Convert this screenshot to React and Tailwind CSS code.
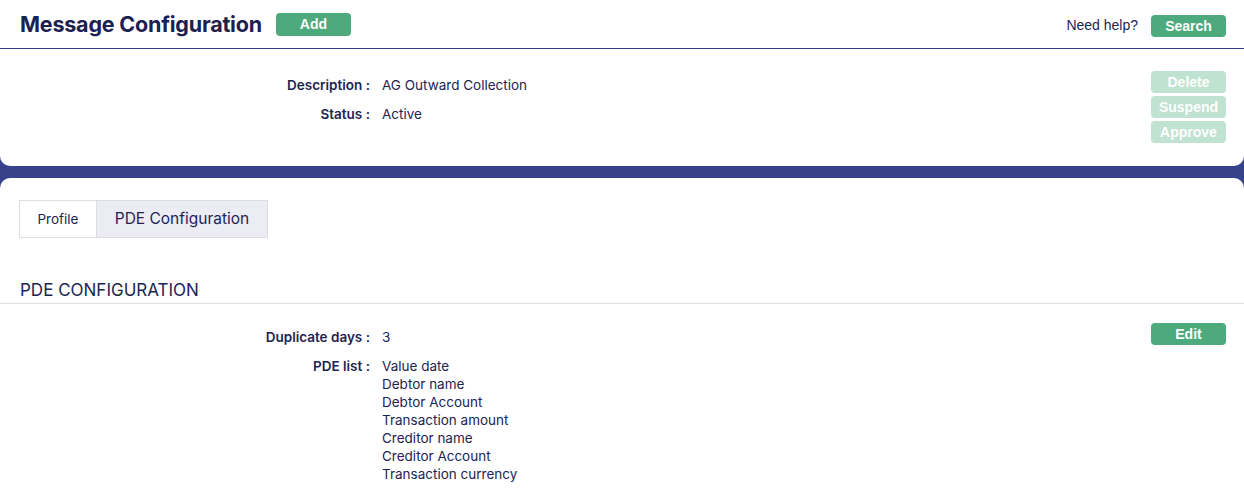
import React from "react";

const pdeList = ["Value date", "Debtor name", "Debtor Account", "Transaction amount", "Creditor name", "Creditor Account", "Transaction currency"];

function GreenButton({ children, faded, className = "" }) {
  return (
    <button
      className={`h-[22px] w-[75px] rounded-[4px] text-[14px] font-bold leading-none text-white ${faded ? "bg-[#bfe2d1]" : "bg-[#4caa7c]"} ${className}`}
      style={{ fontFamily: "'Liberation Sans', Arial, sans-serif" }}
    >
      {children}
    </button>
  );
}

export default function App() {
  return (
    <div className="flex min-h-screen w-[1244px] flex-col bg-[#36428a] text-[#1d2452]" style={{ fontFamily: "Inter, 'Noto Sans', sans-serif" }}>
      <div className="rounded-b-[10px] bg-white">
        <div className="flex h-[49px] items-center justify-between border-b border-[#2f3b86] pl-[20px] pr-[18px]">
          <div className="flex items-center">
            <div className="text-[21.5px] font-bold tracking-[-0.2px] text-[#1b2050]">Message Configuration</div>
            <GreenButton className="ml-[14px] h-[23px]">Add</GreenButton>
          </div>
          <div className="flex items-center pt-[3px]">
            <span className="mr-[13px] text-[14px] text-[#1d2452]" style={{ fontFamily: "'Liberation Sans', Arial, sans-serif" }}>Need help?</span>
            <GreenButton>Search</GreenButton>
          </div>
        </div>
        <div className="flex h-[117px] items-start justify-between pr-[18px] pt-[22px]">
          <div className="mt-[5px] grid grid-cols-[370px_auto] content-start gap-x-[12px] gap-y-[11px] text-[13.5px] leading-[18px]">
            <div className="text-right font-semibold">Description :</div>
            <div>AG Outward Collection</div>
            <div className="text-right font-semibold">Status :</div>
            <div>Active</div>
          </div>
          <div className="flex flex-col gap-[3px]">
            <GreenButton faded>Delete</GreenButton>
            <GreenButton faded>Suspend</GreenButton>
            <GreenButton faded>Approve</GreenButton>
          </div>
        </div>
      </div>
      <div className="mt-[12px] flex-1 rounded-t-[10px] bg-white pb-[10px] pt-[22px]">
        <div className="ml-[19px] flex h-[38px] w-fit border border-[#dcdde3]">
          <div className="flex w-[76px] items-center justify-center text-[13.5px]">Profile</div>
          <div className="flex w-[171px] items-center justify-center border-l border-[#dcdde3] bg-[#ececf4] text-[15.5px]">PDE Configuration</div>
        </div>
        <div className="mt-[42px] border-b border-[#dedede] pb-[2px] pl-[20px] text-[17px] leading-[21px]">PDE CONFIGURATION</div>
        <div className="flex items-start justify-between pr-[18px] pt-[19px]">
          <div className="grid grid-cols-[370px_auto] content-start gap-x-[12px] gap-y-[11px] text-[13.5px] leading-[18px]">
            <div className="pt-[5px] text-right font-semibold">Duplicate days :</div>
            <div className="pt-[5px]">3</div>
            <div className="text-right font-semibold">PDE list :</div>
            <div className="flex flex-col">
              {pdeList.map((item) => (
                <div key={item}>{item}</div>
              ))}
            </div>
          </div>
          <GreenButton>Edit</GreenButton>
        </div>
      </div>
    </div>
  );
}
